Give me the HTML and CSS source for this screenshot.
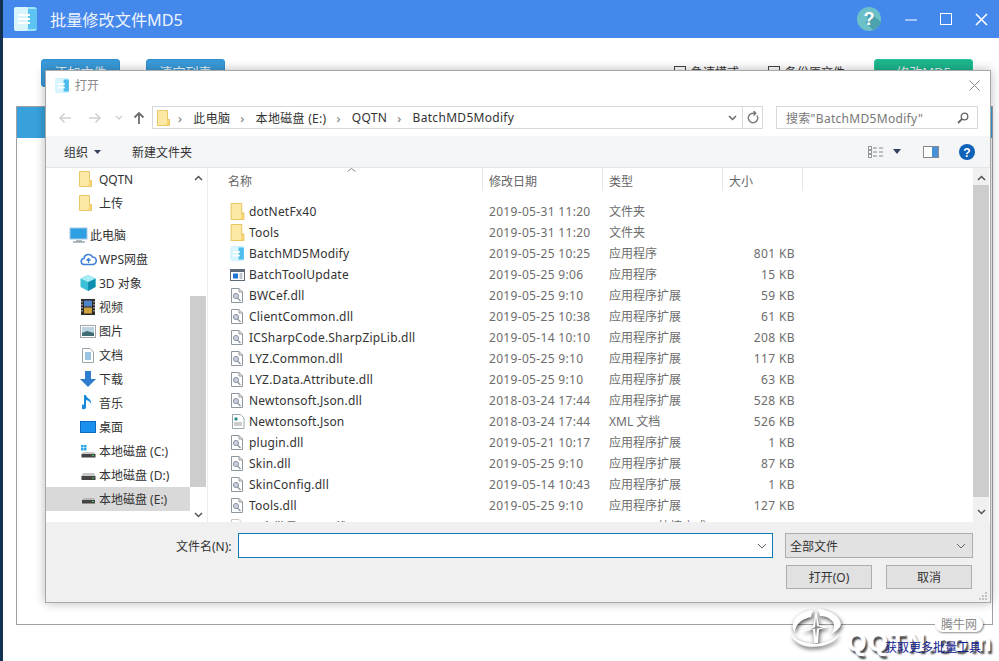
FILE: index.html
```html
<!DOCTYPE html>
<html lang="zh-CN">
<head>
<meta charset="utf-8">
<title>批量修改文件MD5</title>
<link rel="stylesheet" href="styles.css">
</head>
<body>
<div class="app">
  <header class="titlebar">
    <svg class="app-logo" width="26" height="26" viewBox="0 0 26 26"><rect x="1" y="1" width="23" height="24" rx="3" fill="#9fe3fa"/><rect x="1" y="1" width="14" height="24" rx="2" fill="#d8f5fd"/><rect x="15" y="3" width="9" height="20" fill="#5cc3f3"/><rect x="5" y="8" width="12" height="2" fill="#fff"/><rect x="5" y="12" width="12" height="2" fill="#fff"/><rect x="5" y="16" width="12" height="2" fill="#fff"/></svg>
    <h1 class="app-title">批量修改文件MD5</h1>
    <div class="win-controls">
      <svg class="help-badge" width="24" height="24" viewBox="0 0 24 24"><circle cx="12" cy="12" r="12" fill="#6cc0c8"/><path d="M12 5l12 10a12 12 0 0 1-8 8l-7-7z" fill="#4ba1ac"/><text x="12" y="18" text-anchor="middle" class="help-q">?</text></svg>
      <svg class="win-btn" width="13" height="13" viewBox="0 0 13 13"><path d="M0 7h12" stroke="#fff" stroke-width="1"/></svg>
      <svg class="win-btn" width="13" height="13" viewBox="0 0 13 13"><rect x=".5" y=".5" width="11" height="11" fill="none" stroke="#fff"/></svg>
      <svg class="win-btn" width="13" height="13" viewBox="0 0 13 13"><path d="M1 1l11 11M12 1L1 12" stroke="#fff" stroke-width="1.6"/></svg>
    </div>
  </header>
  <div class="app-toolbar">
    <button class="app-btn blue">添加文件</button>
    <button class="app-btn blue">清空列表</button>
    <span class="spacer"></span>
    <label class="app-check"><i></i>急速模式</label>
    <label class="app-check"><i></i>备份原文件</label>
    <button class="app-btn green">修改MD5</button>
  </div>
  <div class="app-table"><div class="app-table-head"></div></div>
</div>

<section class="dialog">
  <div class="dlg-title">
    <svg width="15" height="15" viewBox="0 0 26 26"><rect x="1" y="1" width="23" height="24" rx="2" fill="#9fe3fa"/><rect x="1" y="1" width="14" height="24" fill="#d8f5fd"/><rect x="15" y="3" width="9" height="20" fill="#4fbcee"/><rect x="5" y="9" width="12" height="3" fill="#fff"/><rect x="5" y="15" width="12" height="3" fill="#fff"/></svg>
    <span class="dlg-name">打开</span>
    <svg class="dlg-close" width="11" height="11" viewBox="0 0 11 11"><path d="M.5.5l10 10M10.500.5l-10 10" stroke="#8a8a8a" stroke-width="1"/></svg>
  </div>
  <div class="dlg-nav">
    <svg class="nav-ic" width="14" height="12" viewBox="0 0 14 12"><path d="M13 6H2M6.500 1.500L2 6l4.500 4.500" fill="none" stroke="#d0d0d0" stroke-width="1.600"/></svg>
    <svg class="nav-ic fw" width="14" height="12" viewBox="0 0 14 12"><path d="M1 6h11M7.500 1.500L12 6l-4.500 4.500" fill="none" stroke="#d0d0d0" stroke-width="1.600"/></svg>
    <svg class="nav-ic dn" width="8" height="6" viewBox="0 0 8 6"><path d="M1 1l3 3 3-3" fill="none" stroke="#d0d0d0" stroke-width="1.300"/></svg>
    <svg class="nav-ic up" width="12" height="14" viewBox="0 0 12 14"><path d="M6 13V2M1.500 6.500L6 2l4.500 4.500" fill="none" stroke="#6e6e6e" stroke-width="1.800"/></svg>
    <div class="addr">
      <svg class="folder-sm" width="13" height="16" viewBox="0 0 13 16"><use href="#folder"/></svg>
      <span class="crumb">›</span><span>此电脑</span><span class="crumb">›</span><span>本地磁盘 (E:)</span><span class="crumb">›</span><span>QQTN</span><span class="crumb">›</span><span>BatchMD5Modify</span>
      <svg class="addr-dn" width="9" height="6" viewBox="0 0 9 6"><path d="M1 1l3.500 3.500L8 1" fill="none" stroke="#666" stroke-width="1.500"/></svg>
      <span class="addr-ref"><svg width="12" height="13" viewBox="0 0 12 13"><path d="M10 4.500A4.700 4.700 0 1 1 6 2.300H8.500M6.500 0l2.300 2.300L6.500 4.600" fill="none" stroke="#777" stroke-width="1.400"/></svg></span>
    </div>
    <div class="search">
      <span>搜索"BatchMD5Modify"</span>
      <svg width="12" height="12" viewBox="0 0 12 12"><circle cx="7.500" cy="4.500" r="3.300" fill="none" stroke="#666" stroke-width="1.300"/><path d="M5 7l-4 4" stroke="#666" stroke-width="1.800"/></svg>
    </div>
  </div>
  <div class="dlg-tools">
    <span class="tool">组织<svg class="caret" width="7" height="4" viewBox="0 0 7 4"><path d="M0 0h7L3.500 4z" fill="#33415c"/></svg></span>
    <span class="tool new">新建文件夹</span>
    <span class="spacer"></span>
    <svg class="view-ic" width="16" height="12" viewBox="0 0 16 12"><rect x=".5" y=".5" width="3" height="3" fill="none" stroke="#999"/><rect x=".5" y="4.500" width="3" height="3" fill="none" stroke="#999"/><rect x=".5" y="8.500" width="3" height="3" fill="none" stroke="#999"/><path d="M5 2h4M11 2h4M5 6h4M11 6h4M5 10h4M11 10h4" stroke="#888"/></svg>
    <svg class="caret-v" width="8" height="5" viewBox="0 0 8 5"><path d="M0 0h8L4 5z" fill="#33415c"/></svg>
    <svg class="pane-ic" width="16" height="12" viewBox="0 0 16 12"><rect x=".5" y=".5" width="15" height="11" fill="#fff" stroke="#888"/><rect x="9" y="1" width="6" height="10" fill="#4a90d9"/></svg>
    <svg class="dlg-help" width="16" height="16" viewBox="0 0 16 16"><circle cx="8" cy="8" r="8" fill="#0f62b8"/><text x="8" y="12.500" text-anchor="middle" class="help-small">?</text></svg>
  </div>
  <div class="dlg-main">
    <nav class="tree">
      <ul class="tree-list">
        <li class="t-sub"><svg width="13" height="16" viewBox="0 0 13 16"><use href="#folder"/></svg>QQTN</li>
        <li class="t-sub"><svg width="13" height="16" viewBox="0 0 13 16"><use href="#folder"/></svg>上传</li>
        <li class="t-pc"><svg width="20" height="16" viewBox="0 0 20 16"><rect x="1" y="1" width="17" height="11" fill="#2f9fe3" stroke="#9fc7e4"/><path d="M7 14h6M4 15h12" stroke="#9aa6ad" stroke-width="1.400"/></svg>此电脑</li>
        <li class="t-item"><svg width="17" height="14" viewBox="0 0 17 14"><path d="M4.500 12.500a3 3 0 0 1-.5-6 4.500 4.500 0 0 1 8.500-1.500 3.700 3.700 0 0 1 0 7.500z" fill="#fff" stroke="#3f7fd8" stroke-width="1.600"/><path d="M8.500 11V7M6.500 8.500l2-2 2 2" fill="none" stroke="#3f7fd8" stroke-width="1.200"/></svg>WPS网盘</li>
        <li class="t-item"><svg width="16" height="16" viewBox="0 0 16 16"><path d="M8 0l7.500 3.500v8.500L8 16 .5 12V3.500z" fill="#3cc0d8"/><path d="M8 7l7.500-3.500v8.500L8 16z" fill="#0f8fb0"/><path d="M8 0l7.500 3.500L8 7 .5 3.500z" fill="#a5ecf5"/></svg>3D 对象</li>
        <li class="t-item"><svg width="14" height="16" viewBox="0 0 14 16"><rect width="14" height="16" fill="#2b2b2b"/><rect x="3" y="1.500" width="8" height="6" fill="#4f83c5"/><rect x="3" y="8.500" width="8" height="6" fill="#d0a23d"/><path d="M1 2v12M13 2v12" stroke="#ddd" stroke-width="1" stroke-dasharray="1.500 1.500"/></svg>视频</li>
        <li class="t-item"><svg width="16" height="13" viewBox="0 0 16 13"><rect x=".5" y=".5" width="15" height="12" fill="#fff" stroke="#a5a5a5"/><rect x="2" y="2" width="12" height="9" fill="#bcd3e2"/><path d="M2 8l5-2 7 2v3H2z" fill="#3f6b73"/></svg>图片</li>
        <li class="t-item"><svg width="12" height="15" viewBox="0 0 12 15"><path d="M.5.500h7.500l3.500 3.500v10.500H.5z" fill="#fff" stroke="#9aa7ad"/><path d="M3 5h6M3 7h6M3 9h6M3 11h6" stroke="#3b8bc4"/></svg>文档</li>
        <li class="t-item"><svg width="16" height="16" viewBox="0 0 16 16"><path d="M5 0h6v8h5l-8 8-8-8h5z" fill="#2f7fd0"/></svg>下载</li>
        <li class="t-item"><svg width="12" height="16" viewBox="0 0 12 16"><path d="M4 1v10.500a2.700 2.300 0 1 1-2-1.800V0h2c0 3 6 4 5 9-.5-2.500-3-3.500-5-4z" fill="#1a8ae0"/></svg>音乐</li>
        <li class="t-item"><svg width="16" height="12" viewBox="0 0 16 12"><rect x=".5" y=".5" width="15" height="11" fill="#1b90ef" stroke="#0f6cbd"/></svg>桌面</li>
        <li class="t-item"><svg width="15" height="13" viewBox="0 0 15 13"><rect x="0" y="0" width="2.500" height="2.500" fill="#29a5e8"/><rect x="3" y="0" width="2.500" height="2.500" fill="#29a5e8"/><rect x="0" y="3" width="2.500" height="2.500" fill="#29a5e8"/><rect x="3" y="3" width="2.500" height="2.500" fill="#29a5e8"/><path d="M2 7h11l1.500 2H.5z" fill="#c9c9c9"/><rect x=".5" y="9" width="14" height="3.500" fill="#444"/><rect x="11" y="10" width="2" height="1" fill="#3fd04a"/></svg>本地磁盘 (C:)</li>
        <li class="t-item"><svg width="15" height="13" viewBox="0 0 15 13"><path d="M2 4h11l1.500 3H.5z" fill="#c9c9c9"/><rect x=".5" y="7" width="14" height="4" fill="#444"/><rect x="11" y="8.500" width="2" height="1" fill="#3fd04a"/></svg>本地磁盘 (D:)</li>
        <li class="t-item sel"><svg width="15" height="13" viewBox="0 0 15 13"><path d="M3 5h10l1 2H1z" fill="#b8b8b8"/><rect x="1" y="7" width="13" height="3.500" fill="#444"/><rect x="11" y="8" width="2" height="1" fill="#3fd04a"/></svg>本地磁盘 (E:)</li>
      </ul>
      <div class="vbar tree-bar">
        <svg class="arr" width="9" height="6" viewBox="0 0 9 6"><path d="M1 5l3.500-3.500L8 5" fill="none" stroke="#555" stroke-width="1.500"/></svg>
        <div class="thumb t1"></div>
        <svg class="arr" width="9" height="6" viewBox="0 0 9 6"><path d="M1 1l3.500 3.500L8 1" fill="none" stroke="#555" stroke-width="1.500"/></svg>
      </div>
    </nav>
    <div class="files">
      <div class="file-area">
        <div class="file-head">
          <span class="h-name">名称<svg class="sort" width="9" height="4" viewBox="0 0 9 4"><path d="M.5 3.500L4.500.500l4 3" fill="none" stroke="#888"/></svg></span><span class="h">修改日期</span><span class="h">类型</span><span class="h">大小</span><span class="h h-end"></span>
        </div>
        <div class="rows">
          <div class="row"><span class="n"><svg width="15" height="17" viewBox="0 0 13 16"><use href="#folder"/></svg>dotNetFx40</span><span class="d">2019-05-31 11:20</span><span class="t">文件夹</span><span class="s"></span></div>
          <div class="row"><span class="n"><svg width="15" height="17" viewBox="0 0 13 16"><use href="#folder"/></svg>Tools</span><span class="d">2019-05-31 11:20</span><span class="t">文件夹</span><span class="s"></span></div>
          <div class="row"><span class="n"><svg width="15" height="15" viewBox="0 0 26 26"><rect x="1" y="1" width="23" height="24" rx="2" fill="#9fe3fa"/><rect x="1" y="1" width="14" height="24" fill="#d8f5fd"/><rect x="15" y="3" width="9" height="20" fill="#4fbcee"/><rect x="5" y="9" width="12" height="3" fill="#fff"/><rect x="5" y="15" width="12" height="3" fill="#fff"/></svg>BatchMD5Modify</span><span class="d">2019-05-25 10:25</span><span class="t">应用程序</span><span class="s">801 KB</span></div>
          <div class="row"><span class="n"><svg width="15" height="12" viewBox="0 0 15 12"><rect x=".5" y=".5" width="14" height="11" fill="#fff" stroke="#5f6b78"/><rect x="1" y="1" width="13" height="2" fill="#5f6b78"/><rect x="3" y="4.500" width="5" height="5" fill="#1c76d2"/><path d="M9.500 5h3M9.500 7h3M9.500 9h3" stroke="#7f8b98"/></svg>BatchToolUpdate</span><span class="d">2019-05-25 9:06</span><span class="t">应用程序</span><span class="s">15 KB</span></div>
          <div class="row"><span class="n"><svg width="12" height="15" viewBox="0 0 12 15"><use href="#dll"/></svg>BWCef.dll</span><span class="d">2019-05-25 9:10</span><span class="t">应用程序扩展</span><span class="s">59 KB</span></div>
          <div class="row"><span class="n"><svg width="12" height="15" viewBox="0 0 12 15"><use href="#dll"/></svg>ClientCommon.dll</span><span class="d">2019-05-25 10:38</span><span class="t">应用程序扩展</span><span class="s">61 KB</span></div>
          <div class="row"><span class="n"><svg width="12" height="15" viewBox="0 0 12 15"><use href="#dll"/></svg>ICSharpCode.SharpZipLib.dll</span><span class="d">2019-05-14 10:10</span><span class="t">应用程序扩展</span><span class="s">208 KB</span></div>
          <div class="row"><span class="n"><svg width="12" height="15" viewBox="0 0 12 15"><use href="#dll"/></svg>LYZ.Common.dll</span><span class="d">2019-05-25 9:10</span><span class="t">应用程序扩展</span><span class="s">117 KB</span></div>
          <div class="row"><span class="n"><svg width="12" height="15" viewBox="0 0 12 15"><use href="#dll"/></svg>LYZ.Data.Attribute.dll</span><span class="d">2019-05-25 9:10</span><span class="t">应用程序扩展</span><span class="s">63 KB</span></div>
          <div class="row"><span class="n"><svg width="12" height="15" viewBox="0 0 12 15"><use href="#dll"/></svg>Newtonsoft.Json.dll</span><span class="d">2018-03-24 17:44</span><span class="t">应用程序扩展</span><span class="s">528 KB</span></div>
          <div class="row"><span class="n"><svg width="15" height="15" viewBox="0 0 15 15"><path d="M2.500.500h8l3.500 3.500v10.500H2.500z" fill="#fff" stroke="#9aa7ad"/><circle cx="6" cy="5" r="1.700" fill="#2c8f8f"/><path d="M4 9h8M4 11h8" stroke="#999"/></svg>Newtonsoft.Json</span><span class="d">2018-03-24 17:44</span><span class="t">XML 文档</span><span class="s">526 KB</span></div>
          <div class="row"><span class="n"><svg width="12" height="15" viewBox="0 0 12 15"><use href="#dll"/></svg>plugin.dll</span><span class="d">2019-05-21 10:17</span><span class="t">应用程序扩展</span><span class="s">1 KB</span></div>
          <div class="row"><span class="n"><svg width="12" height="15" viewBox="0 0 12 15"><use href="#dll"/></svg>Skin.dll</span><span class="d">2019-05-25 9:10</span><span class="t">应用程序扩展</span><span class="s">87 KB</span></div>
          <div class="row"><span class="n"><svg width="12" height="15" viewBox="0 0 12 15"><use href="#dll"/></svg>SkinConfig.dll</span><span class="d">2019-05-14 10:43</span><span class="t">应用程序扩展</span><span class="s">1 KB</span></div>
          <div class="row"><span class="n"><svg width="12" height="15" viewBox="0 0 12 15"><use href="#dll"/></svg>Tools.dll</span><span class="d">2019-05-25 9:10</span><span class="t">应用程序扩展</span><span class="s">127 KB</span></div>
          <div class="row"><span class="n"><svg width="12" height="15" viewBox="0 0 12 15"><path d="M.5.500h7.500l3.500 3.500v10.500H.5z" fill="#fff" stroke="#c8c8c8"/></svg>更多批量工具下载</span><span class="d"></span><span class="t">Internet 快捷方式</span><span class="s"></span></div>
        </div>
      </div>
      <div class="vbar file-bar">
        <svg class="arr" width="9" height="6" viewBox="0 0 9 6"><path d="M1 5l3.500-3.500L8 5" fill="none" stroke="#555" stroke-width="1.500"/></svg>
        <div class="thumb t2"></div>
        <svg class="arr" width="9" height="6" viewBox="0 0 9 6"><path d="M1 1l3.500 3.500L8 1" fill="none" stroke="#555" stroke-width="1.500"/></svg>
      </div>
    </div>
  </div>
  <div class="dlg-foot">
    <div class="foot-row">
      <span class="fn-label">文件名(N):</span>
      <div class="fn-input"><svg width="10" height="6" viewBox="0 0 10 6"><path d="M1 1l4 4 4-4" fill="none" stroke="#666"/></svg></div>
      <div class="fn-type"><span>全部文件</span><svg width="10" height="6" viewBox="0 0 10 6"><path d="M1 1l4 4 4-4" fill="none" stroke="#666"/></svg></div>
    </div>
    <div class="foot-actions">
      <button class="dlg-btn">打开(O)</button>
      <button class="dlg-btn">取消</button>
    </div>
    <svg class="grip" width="8" height="8" viewBox="0 0 8 8"><path d="M6 0h2v2H6zM3 3h2v2H3zM6 3h2v2H6zM0 6h2v2H0zM3 6h2v2H3zM6 6h2v2H6z" fill="#c4c4c4"/></svg>
  </div>
</section>

<div class="watermark">
  <svg class="wm-logo" width="52" height="42" viewBox="0 0 52 42"><path d="M28 1c12 1 22 7 23 15-1 5-6 8-10 10 3-4 4-8 2-12-3-4-8-6-13-6zM23 2c-10 1-19 6-20 14-1 3 0 6 2 8 0-7 6-13 16-15zM1 26c8 11 34 15 48 0-4 14-42 20-48 0z" fill="#fff"/><path d="M26 3l3 14 10 2-10 2.500L28 35h-4l-1-13.500L12 24l11-6z" fill="#fff"/><path d="M26 9l1 9 6 1.500-6 1-1 9-1-9-6 1.500 6-3z" fill="#8d8d8d"/></svg>
  <span class="wm-text">QQTN.com</span>
  <span class="wm-pill">腾牛网</span>
</div>
<a class="more-link">获取更多批量工具</a>

<svg class="defs" width="0" height="0">
  <defs>
    <g id="folder"><path d="M.5.500h10v11l-.5 4H.5z" fill="#fde9a6" stroke="#e9c765"/><path d="M10.500 9.500h2v6h-3" fill="#fbd774" stroke="#e9c765"/></g>
    <g id="dll"><path d="M.5.500h7.500l3.500 3.500v10.500H.5z" fill="#fff" stroke="#8e979e"/><path d="M8 .5v3.500h3.500" fill="none" stroke="#8e979e"/><circle cx="5" cy="8" r="2.600" fill="#ccd" stroke="#8c98a6"/><path d="M6.500 10l3 3" stroke="#8c98a6" stroke-width="1.400"/></g>
  </defs>
</svg>
</body>
</html>
```

FILE: styles.css
```css
* { box-sizing: border-box; }
html, body { margin: 0; height: 100%; }
body {
  width: 999px; height: 661px; overflow: hidden; position: relative;
  background: #fff; color: #333;
  font-family: "Noto Sans", "Noto Sans CJK SC", sans-serif;
  font-size: 12px;
}
ul { list-style: none; margin: 0; padding: 0; }
button { font: inherit; }
.spacer { flex: 1; }
.defs { position: absolute; }

.app { height: 661px; margin-left: 3px; display: flex; flex-direction: column; box-shadow: -3px 0 0 #12304f; }
.titlebar { height: 38px; background: #4488ec; display: flex; align-items: center; padding: 0 11px 0 10px; flex: none; }
.app-logo { flex: none; }
.app-title { margin: 0 0 0 11px; font-size: 16.2px; font-weight: 400; color: #eef4fd; }
.win-controls { margin-left: auto; display: flex; align-items: center; }
.help-badge { margin-right: 2px; }
.help-q { font: 700 18px "Liberation Sans", sans-serif; fill: #fff; }
.win-btn { margin-left: 22px; }

.app-toolbar { height: 68px; padding: 21px 26px 0 38px; display: flex; align-items: flex-start; flex: none; }
.app-btn { width: 79px; height: 28px; border: 1px solid #2f8fd0; border-radius: 3px; color: #e8f4fb; font-size: 13px; padding: 0 0 4px; margin-right: 26px; }
.app-btn.blue { background: #3a9ad9; }
.app-btn.green { background: #1cb78d; border-color: #26c49c; width: 99px; margin-right: 0; }
.app-check { display: flex; align-items: center; gap: 5px; margin-right: 29px; height: 20px; margin-top: 3px; font-size: 12px; color: #333; }
.app-check i { width: 12px; height: 12px; border: 1px solid #444; }
.app-table { flex: none; height: 519px; margin: 0 6px 0 13px; border: 1px solid #a0a0a0; }
.app-table-head { height: 31px; background: #38a1dc; }

.dialog {
  position: absolute; left: 45px; top: 70px; width: 946px; height: 533px;
  background: #fff; border: 1px solid #a8a8a8;
  box-shadow: 0 0 10px rgba(0,0,0,.28);
  display: flex; flex-direction: column;
}
.dlg-title { height: 29px; flex: none; display: flex; align-items: center; padding: 0 10px 1px 9px; }
.dlg-name { margin-left: 5px; color: #8a8a8a; }
.dlg-close { margin-left: auto; }
.dlg-nav { height: 35px; flex: none; display: flex; align-items: center; padding: 0 0 0 12px; }
.nav-ic { flex: none; }
.nav-ic.fw { margin-left: 16px; }
.nav-ic.dn { margin-left: 13px; }
.nav-ic.up { margin-left: 10px; }
.addr { margin-left: 7px; width: 611px; height: 23px; border: 1px solid #d9d9d9; display: flex; align-items: center; padding-left: 4px; color: #333; letter-spacing: .3px; }
.folder-sm { flex: none; margin-right: 8px; }
.crumb { color: #777; margin: 0 11px 0 10px; font-size: 13px; }
.crumb:first-of-type { margin-left: 0; }
.addr-dn { margin-left: auto; margin-right: 5px; }
.addr-ref { width: 20px; height: 21px; border-left: 1px solid #d9d9d9; display: flex; align-items: center; justify-content: center; }
.search { margin-left: 13px; width: 202px; height: 23px; border: 1px solid #d9d9d9; display: flex; align-items: center; justify-content: space-between; padding: 0 8px 0 9px; color: #777; letter-spacing: .3px; }
.dlg-tools { height: 31px; margin-top: 1px; flex: none; background: #f4f5f7; display: flex; align-items: center; padding: 0 15px 0 18px; }
.tool { color: #333; display: flex; align-items: center; }
.caret { margin-left: 6px; }
.tool.new { margin-left: 31px; }
.view-ic { margin-right: 9px; }
.caret-v { margin-right: 22px; }
.pane-ic { margin-right: 20px; }
.dlg-main { flex: none; height: 355px; display: flex; border-top: 1px solid #e6e6e6; overflow: hidden; }
.tree { width: 162px; flex: none; display: flex; border-right: 1px solid #ededed; }
.tree-list { flex: none; width: 144px; height: 355px; margin-top: -1px; overflow: hidden; }
.tree-list li { height: 24px; display: flex; align-items: center; }
.tree-list svg { flex: none; }
.tree-list .t-sub { padding-left: 33px; gap: 7px; }
.tree-list .t-pc { padding-left: 23px; gap: 1px; margin-top: 8px; }
.tree-list .t-item { padding-left: 31px; display: grid; grid-template-columns: 22px auto; justify-content: start; justify-items: center; align-items: center; }
.tree-list .sel { background: #d9d9d9; }
.vbar { background: #f0f0f0; display: flex; flex-direction: column; align-items: center; justify-content: space-between; flex: none; width: 16px; padding: 7px 0; position: relative; }
.tree-bar { background: #fff; width: 17px; padding: 7px 1px 4px 0; }
.arr { flex: none; z-index: 1; }
.thumb { position: absolute; left: 0; right: 0; background: #cdcdcd; }
.t1 { top: 128px; height: 191px; right: 1px; }
.t2 { top: 17px; height: 312px; }
.files { flex: 1; display: flex; min-width: 0; padding-left: 2px; }
.file-area { flex: 1; display: flex; flex-direction: column; overflow: hidden; min-width: 0; }
.file-head { height: 27px; flex: none; display: grid; grid-template-columns: 273px 120px 120px 80px; color: #666; }
.file-head > span { border-right: 1px solid #e6e6e6; display: flex; align-items: center; padding: 3px 0 0 6px; position: relative; }
.file-head .h-name { padding-left: 18px; }
.sort { position: absolute; left: 137px; top: 0; }
.file-head .h-end { border-right: 0; }
.rows { padding-top: 6px; }
.row { height: 21px; display: grid; grid-template-columns: 279px 120px 113px 73px; align-items: center; color: #6d6d6d; }
.n { color: #333; display: grid; grid-template-columns: 20px 1fr; column-gap: 2px; padding-left: 17px; align-items: center; justify-items: start; letter-spacing: .2px; white-space: nowrap; }
.n svg { justify-self: center; }
.d { letter-spacing: .32px; }
.t { margin-top: -1px; white-space: nowrap; }
.s { text-align: right; letter-spacing: .4px; }
.file-bar { width: 16px; margin-right: 1px; }

.dlg-foot { flex: 1; background: #f0f0f0; position: relative; padding: 11px 18px 0 130px; }
.foot-row { display: flex; align-items: center; height: 25px; margin-right: -1px; }
.fn-label { color: #333; width: 62px; }
.fn-input { width: 535px; height: 25px; background: #fff; border: 1px solid #0f78b8; display: flex; align-items: center; justify-content: flex-end; padding-right: 5px; }
.fn-type { margin-left: 12px; width: 188px; height: 25px; background: #e2e2e2; border: 1px solid #adadad; display: flex; align-items: center; justify-content: space-between; padding: 0 6px 0 4px; color: #333; }
.foot-actions { display: flex; justify-content: flex-end; gap: 14px; margin-top: 7px; }
.dlg-btn { width: 86px; height: 24px; background: #e1e1e1; border: 1px solid #adadad; color: #333; padding: 0; }
.grip { position: absolute; right: 3px; bottom: 2px; }
.more-link { position: absolute; left: 885px; top: 638px; color: #0f2090; font-size: 12px; }
.watermark { position: absolute; left: 790px; top: 608px; width: 209px; height: 53px; pointer-events: none; }
.wm-logo { position: absolute; left: 0; top: 0; filter: drop-shadow(1px 2px 2px rgba(0,0,0,.7)); }
.wm-text { position: absolute; left: 57px; top: 20px; font: 700 25px "Liberation Sans", sans-serif; letter-spacing: 2px; color: #fff; text-shadow: 0 0 1px #fff, 2px 3px 2px rgba(0,0,0,.75); white-space: nowrap; }
.wm-pill { position: absolute; left: 145px; top: 9px; padding: 0 6px; height: 15px; line-height: 15px; border-radius: 8px; background: #fff; color: #888; font-size: 12px; box-shadow: 1px 1px 2px rgba(0,0,0,.45); }
.help-small { font: 700 12px "Liberation Sans", sans-serif; fill: #fff; }
```
